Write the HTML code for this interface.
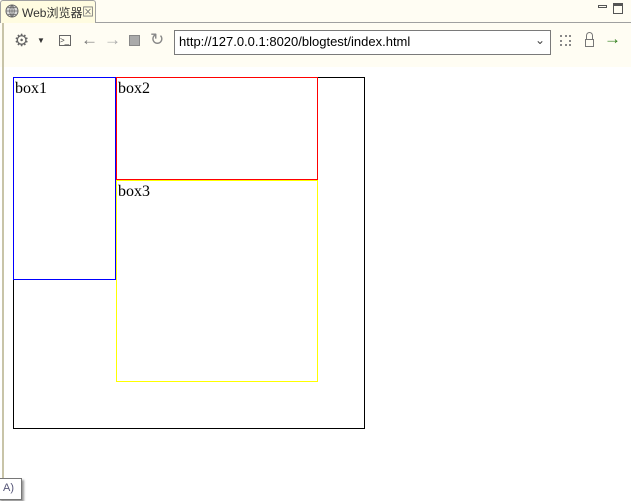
<!DOCTYPE html><html><head><style>
body{margin:0;width:631px;height:501px;background:#fff;position:relative;overflow:hidden;font-family:"Liberation Sans","Noto Sans CJK SC",sans-serif}
.a{position:absolute;box-sizing:border-box}
.t{position:absolute;font-family:"Liberation Serif",serif;font-size:16px;line-height:18px;color:#000}
.h{position:absolute;height:1px}.v{position:absolute;width:1px}
</style></head><body>
<div class="a" style="left:0;top:0;width:631px;height:67px;background:#fffdf3"></div>
<div class="a" style="left:0;top:22px;width:631px;height:1px;background:#a0a0a0"></div>
<div class="a" style="left:0;top:0;width:96px;height:23px;background:#fffce0;border:1px solid #a0a0a0;border-bottom:none;border-radius:3px 3px 0 0"></div>
<svg class="a" style="left:5px;top:4px" width="14" height="14" viewBox="0 0 14 14"><circle cx="7" cy="7" r="6" fill="#ddd" stroke="#666"/><path d="M1 7h12M7 1v12M3 3.5h8M3 10.5h8M7 1c-3 3-3 9 0 12M7 1c3 3 3 9 0 12" stroke="#666" fill="none" stroke-width=".8"/></svg>
<div class="a" style="left:22px;top:4px;font-size:12px;color:#333">Web浏览器</div>
<div class="a" style="left:82px;top:3px;font-size:12px;color:#777">⊠</div>
<div class="a" style="left:598px;top:5px;width:9px;height:3px;border:1px solid #555"></div>
<div class="a" style="left:613px;top:3px;width:10px;height:11px;border:1px solid #555;border-top-width:3px"></div>
<div class="a" style="left:2px;top:23px;width:2px;height:478px;background:#c8c4a8"></div>
<div class="a" style="left:14px;top:31px;font-size:17px;color:#666">⚙</div>
<div class="a" style="left:37px;top:36px;font-size:8px;color:#333">▼</div>
<div class="a" style="left:59px;top:35px;width:12px;height:11px;border:1px solid #666;font-size:8px;line-height:9px;color:#444">&gt;_</div>
<div class="a" style="left:81px;top:30px;font-size:17px;color:#777">←</div>
<div class="a" style="left:104px;top:30px;font-size:17px;color:#aaa">→</div>
<div class="a" style="left:129px;top:35px;width:11px;height:11px;background:#aaa;border:1px solid #888"></div>
<div class="a" style="left:150px;top:30px;font-size:17px;color:#888">↻</div>
<div class="a" style="left:174px;top:30px;width:377px;height:25px;border:1px solid #7a7a7a;background:#fff"></div>
<div class="a" style="left:179px;top:34px;font-size:13px;color:#000">http://127.0.0.1:8020/blogtest/index.html</div>
<div class="a" style="left:535px;top:33px;font-size:12px;color:#444">⌄</div>
<div class="a" style="left:560px;top:35px;width:11px;height:11px;border:2px dotted #888"></div>
<div class="a" style="left:585px;top:39px;width:9px;height:8px;border:1px solid #777"></div>
<div class="a" style="left:586px;top:32px;width:7px;height:8px;border:1px solid #777;border-bottom:none;border-radius:4px 4px 0 0"></div>
<div class="a" style="left:604px;top:29px;font-size:17px;color:#2e7d1a;font-weight:bold">→</div>

<div class="a" style="left:13px;top:77px;width:352px;height:352px;border:1px solid #000"></div>
<!-- box3 yellow -->
<div class="h" style="left:116px;top:180px;width:202px;background:#ffff00"></div>
<div class="h" style="left:116px;top:381px;width:202px;background:#ffff00"></div>
<div class="v" style="left:116px;top:180px;height:202px;background:#ffff00"></div>
<div class="v" style="left:317px;top:180px;height:202px;background:#ffff00"></div>
<!-- box2 red -->
<div class="h" style="left:116px;top:77px;width:202px;background:#ff0000"></div>
<div class="h" style="left:116px;top:179px;width:202px;background:#ff0000"></div>
<div class="v" style="left:116px;top:77px;height:103px;background:#ff0000"></div>
<div class="v" style="left:317px;top:77px;height:103px;background:#ff0000"></div>
<!-- box1 blue -->
<div class="h" style="left:13px;top:77px;width:103px;background:#0000ff"></div>
<div class="h" style="left:13px;top:279px;width:103px;background:#0000ff"></div>
<div class="v" style="left:13px;top:77px;height:203px;background:#0000ff"></div>
<div class="v" style="left:115px;top:77px;height:203px;background:#0000ff"></div>
<div class="t" style="left:15px;top:80px">box1</div>
<div class="t" style="left:118px;top:80px">box2</div>
<div class="t" style="left:118px;top:183px">box3</div>
<div class="a" style="left:-2px;top:478px;width:24px;height:22px;border:1px solid #777;background:#fff;box-shadow:2px 2px 2px #999;font-size:11px;color:#557;padding:3px 0 0 4px">A)</div>
</body></html>
